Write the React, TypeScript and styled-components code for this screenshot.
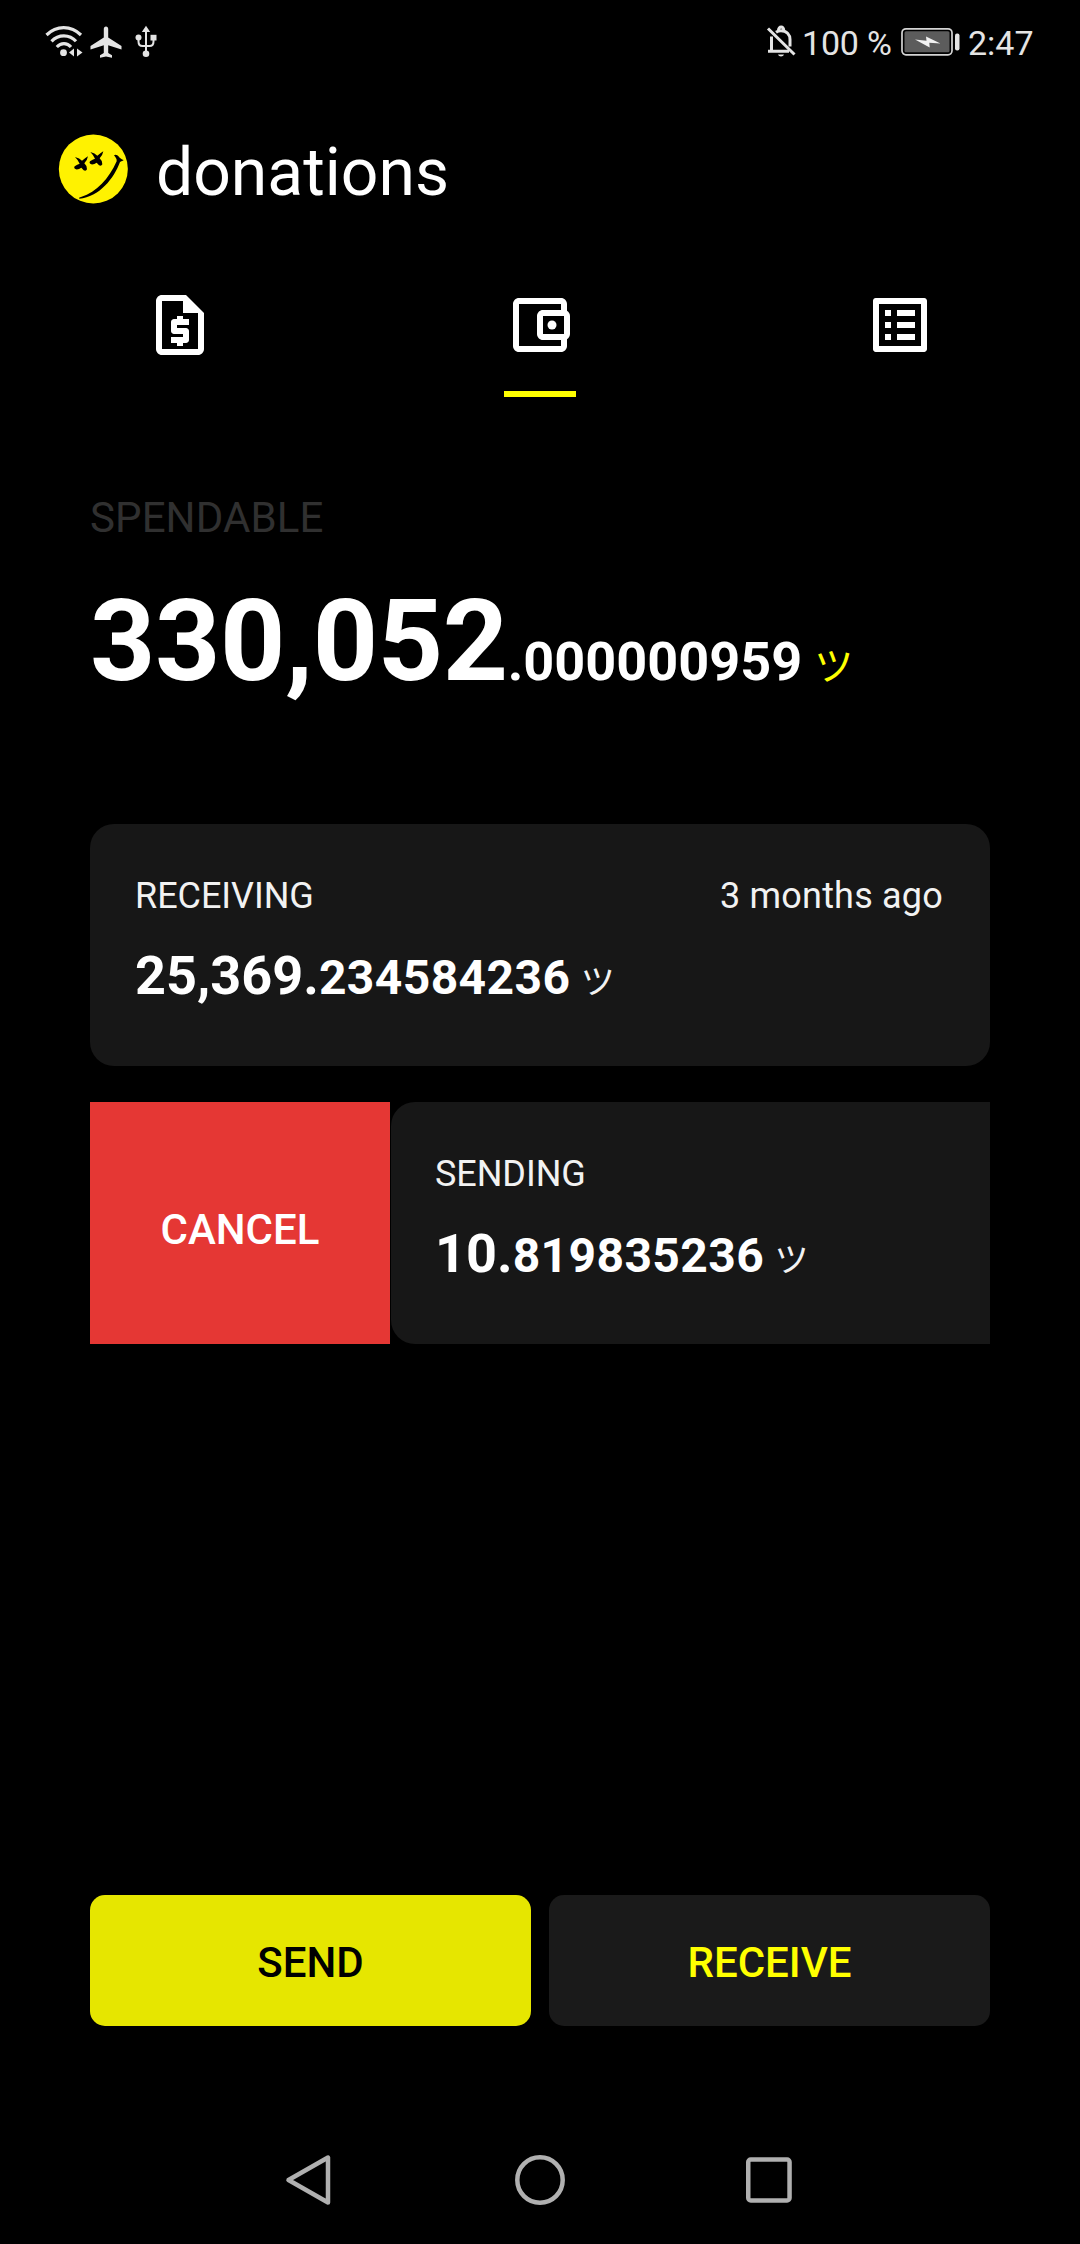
import React from "react";
import styled, { createGlobalStyle } from "styled-components";

const GlobalStyle = createGlobalStyle`
  *, *::before, *::after { box-sizing: border-box; }
  body { margin: 0; background: #000; }
  svg { display: block; flex: none; }
`;

const Screen = styled.main`
  display: flex;
  flex-direction: column;
  width: 1080px;
  height: 2244px;
  background: #000;
  color: #fff;
  font-family: Roboto, "Noto Sans CJK JP", sans-serif;
  overflow: hidden;
`;

const StatusBar = styled.div`
  display: flex;
  justify-content: space-between;
  height: 84px;
  padding: 0 47px 0 44px;
  color: #e4e4e4;
`;

const StatusGroup = styled.div<{ $gap?: number }>`
  display: flex;
  align-items: center;
  gap: ${(p) => p.$gap ?? 0}px;
`;

const StatusText = styled.span<{ $width: number; $gap: number; $tracking?: number }>`
  width: ${(p) => p.$width}px;
  margin-left: ${(p) => p.$gap}px;
  padding-top: 2px;
  font-size: 34px;
  letter-spacing: ${(p) => p.$tracking ?? 0}px;
  line-height: 40px;
  white-space: nowrap;
`;

const BatteryIcon = styled.svg`
  margin-left: 8px;
`;

const Header = styled.header`
  display: flex;
  align-items: center;
  gap: 28px;
  height: 169px;
  padding: 0 58px;
`;

const Title = styled.h1`
  margin: 9px 0 0;
  font-size: 66px;
  font-weight: 400;
  line-height: 78px;
`;

const Tabs = styled.nav`
  display: grid;
  grid-template-columns: repeat(3, 1fr);
  height: 144px;
`;

const Tab = styled.button<{ $active?: boolean }>`
  justify-self: center;
  width: 72px;
  padding: 0;
  border: 0;
  border-top: 6px solid transparent;
  border-bottom: 6px solid ${(p) => (p.$active ? "#ffff00" : "transparent")};
  background: none;
  color: #fff;
`;

const Balance = styled.section`
  display: flex;
  flex-direction: column;
  height: 427px;
  padding: 96px 90px 0;
`;

const BalanceLabel = styled.div`
  color: #303030;
  font-size: 42px;
  letter-spacing: 0.1px;
  line-height: 49px;
`;

const Amount = styled.div<{ $size: number; $line: number; $tracking?: number }>`
  font-size: ${(p) => p.$size}px;
  line-height: ${(p) => p.$line}px;
  letter-spacing: ${(p) => p.$tracking ?? 0}px;
  font-weight: 700;
  white-space: nowrap;
`;

const Decimals = styled.span<{ $size: number; $tracking?: number }>`
  font-size: ${(p) => p.$size}px;
  letter-spacing: ${(p) => p.$tracking ?? 0}px;
`;

const Coin = styled.span<{ $size: number; $color: string; $gap: number }>`
  margin-left: ${(p) => p.$gap}px;
  color: ${(p) => p.$color};
  font-size: ${(p) => p.$size}px;
  font-weight: 400;
  line-height: 1;
`;

const Transactions = styled.section`
  display: flex;
  flex-direction: column;
  gap: 36px;
  flex: 1;
  padding: 0 90px;
`;

const SwipeRow = styled.div`
  display: flex;
  height: 242px;
  overflow: hidden;
`;

const Card = styled.article<{ $inset: number }>`
  flex: none;
  width: 900px;
  height: 242px;
  padding: 51px 47px 0 ${(p) => p.$inset}px;
  border-radius: 24px;
  background: #171717;
`;

const CardTop = styled.div`
  display: flex;
  justify-content: space-between;
  height: 65px;
  color: #f2f2f2;
  font-size: 36px;
  line-height: 42px;
`;

const CardLabel = styled.span`
  letter-spacing: -0.05px;
`;

const CardTime = styled.span`
  letter-spacing: 0.2px;
`;

const CancelAction = styled.button`
  flex: none;
  width: 300px;
  margin-right: 1px;
  padding: 12px 0 0;
  border: 0;
  background: #e53734;
  color: #fff;
  font: 500 42px/49px Roboto, sans-serif;
`;

const Actions = styled.div`
  display: grid;
  grid-template-columns: 1fr 1fr;
  gap: 18px;
  height: 131px;
  margin: 0 90px 90px;
`;

const ActionButton = styled.button<{ $primary?: boolean }>`
  padding: 3px 0 0;
  border: 0;
  border-radius: 15px;
  background: ${(p) => (p.$primary ? "#e6e600" : "#1a1a1a")};
  color: ${(p) => (p.$primary ? "#000" : "#ffff00")};
  font: 500 42px/49px Roboto, sans-serif;
`;

const SystemNav = styled.footer`
  display: flex;
  align-items: center;
  justify-content: center;
  gap: 173px;
  height: 128px;
`;

const WifiIcon = () => (
  <svg width="39" height="34" viewBox="0 0 39 34" fill="none" stroke="currentColor">
    <path d="M2.500 10C12.500 .2 27 .2 37 10" strokeWidth="3.200" />
    <path d="M7.500 16.300C14.500 9 25.500 9 32 16.300" strokeWidth="3.200" />
    <path d="M12.800 22C17 17.600 23 17.600 27 22" strokeWidth="3.200" />
    <circle cx="19.500" cy="27.700" r="3.400" fill="currentColor" stroke="none" />
    <path d="M30 23.500v8L25 27.500zM33 23.500v8L38.500 27.500z" fill="currentColor" stroke="none" />
  </svg>
);

const PlaneIcon = () => (
  <svg width="34" height="34" viewBox="0 0 34 34" fill="currentColor">
    <path d="M17 1.500c1.400 0 2.200 1.200 2.200 2.600v8.400L32.500 21v3.600L19.200 20.300v7.600l3.800 2.300v2.500l-6-1.200-6 1.200v-2.500l3.800-2.300v-7.600L1.500 24.600V21l13.300-8.500V4.100c0-1.400.8-2.600 2.200-2.600z" />
  </svg>
);

const UsbIcon = () => (
  <svg width="34" height="34" viewBox="-2 0 34 34" fill="none" stroke="currentColor" strokeWidth="2">
    <path d="M15 5v23M7.500 12v4.500c0 3 1.500 4.500 4 4.500h7c2.500 0 4-1.500 4-4.500V12" />
    <path d="M15 .8l4.200 6.200h-8.400z" fill="currentColor" stroke="none" />
    <circle cx="7.500" cy="12.500" r="3" fill="currentColor" stroke="none" />
    <path d="M19.500 9.800h6v5.700h-6z" fill="currentColor" stroke="none" />
    <circle cx="15" cy="28.800" r="3.300" fill="currentColor" stroke="none" />
  </svg>
);

const BellOffIcon = () => (
  <svg width="30" height="34" viewBox="0 0 30 34" fill="none" stroke="currentColor" strokeWidth="3">
    <path d="M5.500 11.500v14M2 26.300h21M24 21.500v-7c0-5-3.400-8.800-9-8.800-2.200 0-3.800.7-5 1.600" />
    <path d="M12.500 5.500c-.3-4.600 5.600-4.600 5.200 0M2 3.500l26.500 26" />
    <path d="M12 29.500h6c-.8 2.600-5.200 2.600-6 0z" fill="currentColor" stroke="none" />
  </svg>
);

const Battery = () => (
  <BatteryIcon width="60" height="30" viewBox="0 0 60 30">
    <rect x="1" y="1.800" width="50" height="26" rx="4" fill="#000" stroke="#d4d4d4" strokeWidth="1.700" />
    <rect x="3.500" y="4.300" width="45" height="21" rx="1.500" fill="#5c5c5c" />
    <path d="M14 12.500l11.500 1.300-.5-4.200 14.500 7-11.200-.8.400 4.700z" fill="#f2f2f2" />
    <rect x="54" y="6.500" width="4.500" height="17" rx="2" fill="#e4e4e4" />
  </BatteryIcon>
);

const eye =
  "M51 69Q65 72 72 80Q79 74 90 67Q88 79 79 88Q88 96 87 106Q84 113 77 109L70 101Q62 107 54 106Q46 103 50 97Q58 91 65 89Q61 79 51 69z";

const SmileyLogo = () => (
  <svg width="70" height="70" viewBox="0 0 210 210">
    <circle cx="106" cy="105" r="103.500" fill="#fff200" />
    <path d={eye} />
    <path d={eye} transform="translate(46 -15)" />
    <path d="M168 64c5-4 12 0 17 7 4 4 9 5 12 7-3 4-7 3-11 6-18 49-62 105-122 110-2-3 1-4 5-5 48-15 83-54 107-107 1-7-3-12-8-18z" />
  </svg>
);

const RequestPageIcon = () => (
  <svg width="72" height="72" viewBox="0 0 24 24" fill="currentColor">
    <path fillRule="evenodd" d="M14 2H6c-1.100 0-2 .9-2 2v16c0 1.100.9 2 2 2h12c1.100 0 2-.9 2-2V8zM13 4H6v16h12V8h-5z" />
    <path d="M11 19h2v-1h1c.55 0 1-.45 1-1v-3c0-.55-.45-1-1-1h-3v-1h4v-2h-2V9h-2v1h-1c-.55 0-1 .45-1 1v3c0 .55.45 1 1 1h3v1H9v2h2z" />
  </svg>
);

const WalletIcon = () => (
  <svg width="72" height="72" viewBox="0 0 24 24" fill="currentColor">
    <path d="M21 7.280V5c0-1.100-.9-2-2-2H5c-1.110 0-2 .9-2 2v14c0 1.100.89 2 2 2h14c1.100 0 2-.9 2-2v-2.280c.59-.35 1-.98 1-1.720V9c0-.74-.41-1.370-1-1.720zM20 9v6h-7V9zM5 19V5h14v2h-6c-1.100 0-2 .9-2 2v6c0 1.100.9 2 2 2h6v2z" />
    <circle cx="16" cy="12" r="1.500" />
  </svg>
);

const ListIcon = () => (
  <svg width="72" height="72" viewBox="0 0 24 24" fill="currentColor">
    <path d="M19 5v14H5V5h14m1.100-2H3.900c-.5 0-.9.4-.9.9v16.200c0 .4.4.9.9.9h16.200c.4 0 .9-.5.9-.9V3.900c0-.5-.5-.9-.9-.9zM11 7h6v2h-6zm0 4h6v2h-6zm0 4h6v2h-6zM7 7h2v2H7zm0 4h2v2H7zm0 4h2v2H7z" />
  </svg>
);

interface TransactionProps {
  label: string;
  when?: string;
  whole: string;
  decimals: string;
  inset?: number;
}

const Transaction = ({ label, when, whole, decimals, inset = 45 }: TransactionProps) => (
  <Card $inset={inset}>
    <CardTop>
      <CardLabel>{label}</CardLabel>
      {when && <CardTime>{when}</CardTime>}
    </CardTop>
    <Amount $size={54} $line={72}>
      {whole}.<Decimals $size={48} $tracking={0.4}>{decimals}</Decimals>
      <Coin $size={34} $color="#f2f2f2" $gap={10.5}>ツ</Coin>
    </Amount>
  </Card>
);

export default function App() {
  return (
    <Screen>
      <GlobalStyle />
      <StatusBar>
        <StatusGroup $gap={6}>
          <WifiIcon />
          <PlaneIcon />
          <UsbIcon />
        </StatusGroup>
        <StatusGroup>
          <BellOffIcon />
          <StatusText $width={91} $gap={6} $tracking={-0.2}>100 %</StatusText>
          <Battery />
          <StatusText $width={65} $gap={7}>2:47</StatusText>
        </StatusGroup>
      </StatusBar>
      <Header>
        <SmileyLogo />
        <Title>donations</Title>
      </Header>
      <Tabs>
        <Tab><RequestPageIcon /></Tab>
        <Tab $active><WalletIcon /></Tab>
        <Tab><ListIcon /></Tab>
      </Tabs>
      <Balance>
        <BalanceLabel>SPENDABLE</BalanceLabel>
        <Amount $size={114} $line={198} $tracking={-0.4}>
          330,052<Decimals $size={54}>.000000959</Decimals>
          <Coin $size={39} $color="#ffff00" $gap={12}>ツ</Coin>
        </Amount>
      </Balance>
      <Transactions>
        <SwipeRow>
          <Transaction label="RECEIVING" when="3 months ago" whole="25,369" decimals="234584236" />
        </SwipeRow>
        <SwipeRow>
          <CancelAction>CANCEL</CancelAction>
          <Transaction label="SENDING" whole="10" decimals="819835236" inset={44} />
        </SwipeRow>
      </Transactions>
      <Actions>
        <ActionButton $primary>SEND</ActionButton>
        <ActionButton>RECEIVE</ActionButton>
      </Actions>
      <SystemNav>
        <svg width="70" height="56" viewBox="0 0 70 56" fill="none" stroke="#b0b0b0" strokeWidth="4.500" strokeLinejoin="round">
          <path d="M59 5.500v45L19.500 28z" />
        </svg>
        <svg width="56" height="56" viewBox="0 0 56 56" fill="none" stroke="#b0b0b0" strokeWidth="4.500">
          <circle cx="28" cy="28" r="22.700" />
        </svg>
        <svg width="70" height="56" viewBox="0 0 70 56" fill="none" stroke="#b0b0b0" strokeWidth="4.500">
          <rect x="7.250" y="7.500" width="41.300" height="41" rx="2.500" />
        </svg>
      </SystemNav>
    </Screen>
  );
}
